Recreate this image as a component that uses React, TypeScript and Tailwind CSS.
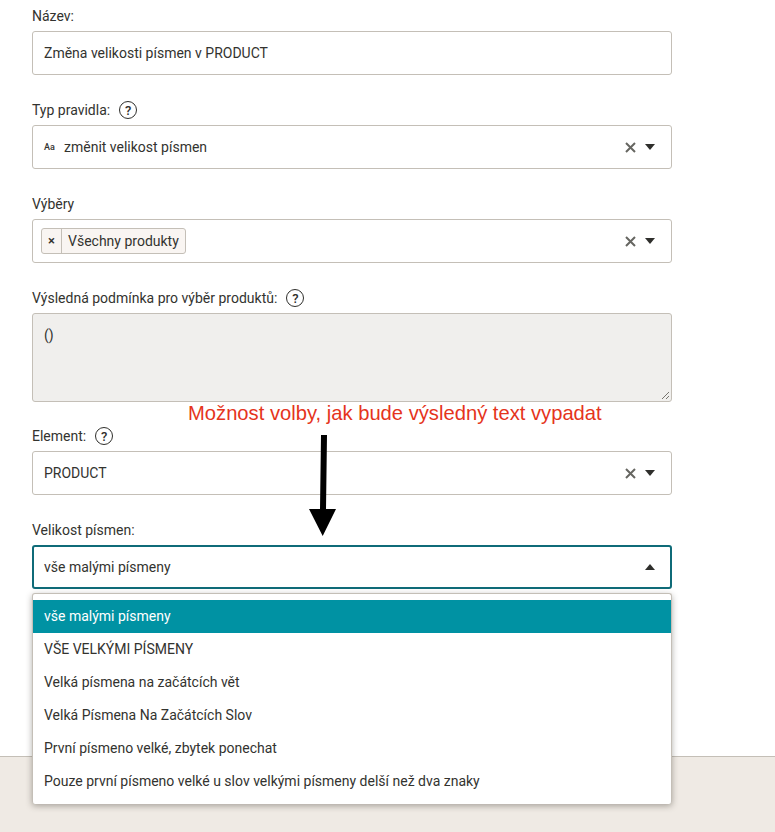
import { ReactNode } from "react";

const options = [
  "vše malými písmeny",
  "VŠE VELKÝMI PÍSMENY",
  "Velká písmena na začátcích vět",
  "Velká Písmena Na Začátcích Slov",
  "První písmeno velké, zbytek ponechat",
  "Pouze první písmeno velké u slov velkými písmeny delší než dva znaky",
];

function Help() {
  return (
    <span className="ml-[9px] flex h-[18px] w-[18px] items-center justify-center rounded-full border-[1.5px] border-[#2f2f2c] text-[13px] font-medium leading-none text-[#2f2f2c]">
      ?
    </span>
  );
}

function Label({ children, help }: { children: ReactNode; help?: boolean }) {
  return (
    <div className="mb-[5px] flex h-5 items-center text-[14px] leading-5 text-[#33332f]">
      {children}
      {help && <Help />}
    </div>
  );
}

function ClearIcon() {
  return (
    <svg width="11" height="11" viewBox="0 0 11 11" className="mr-[9px]">
      <path d="M1 1 L10 10 M10 1 L1 10" stroke="#666661" strokeWidth="2" fill="none" />
    </svg>
  );
}

function Caret({ up }: { up?: boolean }) {
  return (
    <svg width="10" height="6" viewBox="0 0 10 6">
      <path d={up ? "M0 6 L10 6 L5 0 Z" : "M0 0 L10 0 L5 6 Z"} fill="#2f2f2c" />
    </svg>
  );
}

function SelectBox({ children }: { children: ReactNode }) {
  return (
    <div className="mb-[25px] flex h-11 items-center rounded-[3px] border border-[#c4bfb7] bg-white pl-[11px] pr-[16px] text-[14px] text-[#33332f]">
      <div className="flex flex-1 items-center">{children}</div>
      <ClearIcon />
      <Caret />
    </div>
  );
}

export default function App() {
  return (
    <div className="relative flex h-[832px] w-[775px] flex-col overflow-hidden bg-white font-['Roboto',sans-serif]">
      <div className="flex-1 pl-8 pt-[6px]">
        <div className="w-[640px]">
          <Label>Název:</Label>
          <div className="mb-[25px] flex h-11 items-center rounded-[3px] border border-[#c4bfb7] bg-white px-[11px] text-[14px] text-[#33332f]">
            Změna velikosti písmen v PRODUCT
          </div>

          <Label help>Typ pravidla:</Label>
          <SelectBox>
            <span className="mr-[9px] w-[11px] text-[9px] font-medium leading-none">Aa</span>
            změnit velikost písmen
          </SelectBox>

          <Label>Výběry</Label>
          <SelectBox>
            <span className="-ml-[3px] flex h-[26px] items-center rounded-[3px] border border-[#c4bfb7] bg-[#f9f5f2]">
              <span className="flex h-full w-5 items-center justify-center border-r border-[#c4bfb7] text-[13px] font-medium">×</span>
              <span className="px-[6px]">Všechny produkty</span>
            </span>
          </SelectBox>

          <Label help>Výsledná podmínka pro výběr produktů:</Label>
          <div className="relative mb-[24px] h-[89px] rounded-[3px] border border-[#c4bfb7] bg-[#f0efed] px-[11px] py-[11px] text-[14px] leading-5 text-[#33332f]">
            ()
            <svg width="9" height="9" viewBox="0 0 9 9" className="absolute bottom-[1px] right-[1px]">
              <path d="M1 8 L8 1 M5 8 L8 5" stroke="#77756f" strokeWidth="1" fill="none" />
            </svg>
          </div>

          <Label help>Element:</Label>
          <SelectBox>PRODUCT</SelectBox>

          <Label>Velikost písmen:</Label>
          <div className="flex h-11 items-center justify-between rounded-[3px] border-2 border-[#0f6b78] bg-white pl-[10px] pr-[15px] text-[14px] text-[#33332f]">
            vše malými písmeny
            <Caret up />
          </div>
        </div>
      </div>

      <div className="h-[76px] border-t border-[#c4bfb7] bg-[#efeae4]" />

      {/* rozbalený seznam */}
      <div className="absolute left-8 top-[593px] w-[640px] rounded-[3px] border border-[#c4bfb7] border-b-0 bg-white pb-[6px] pt-[6px] text-[14px] text-[#33332f] shadow-[0_2px_6px_rgba(60,55,45,0.4)]">
        {options.map((o, i) => (
          <div
            key={o}
            className={`flex h-[33px] items-center px-[11px] ${i === 0 ? "bg-[#0092a3] text-white" : ""}`}
          >
            {o}
          </div>
        ))}
      </div>

      {/* anotace */}
      <div className="absolute left-[188px] top-[401px] font-['Liberation_Sans',sans-serif] text-[20.2px] leading-6 text-[#e5341c]">
        Možnost volby, jak bude výsledný text vypadat
      </div>
      <svg width="28" height="102" viewBox="0 0 28 102" className="absolute left-[309px] top-[435px]">
        <path d="M12 0 L18 0 L17 74 L27 74 L13.7 101 L0 74 L11 74 Z" fill="#000" />
      </svg>
    </div>
  );
}
